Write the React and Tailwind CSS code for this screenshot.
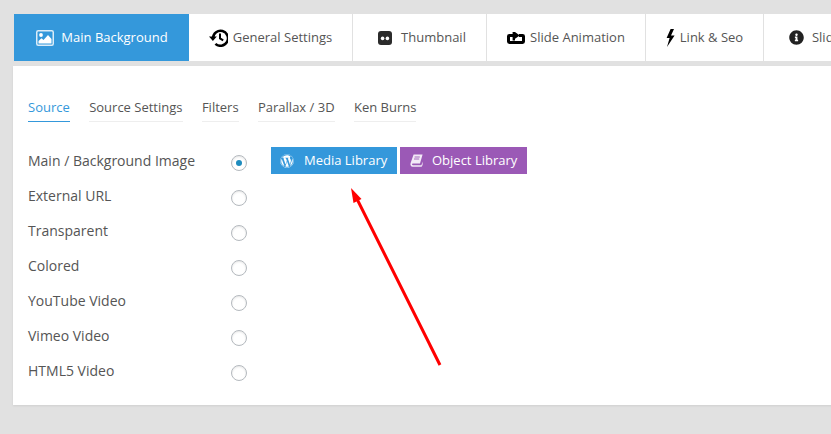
import React from 'react';
import { FaInfoCircle, FaWordpress } from 'react-icons/fa';

const ImageIcon = () => (
    <svg width="18" height="16" viewBox="0 0 18 16">
        <rect x="0.75" y="0.75" width="16.5" height="14.5" rx="1.5" fill="none" stroke="#dcecf8" strokeWidth="1.5" />
        <circle cx="5" cy="5" r="1.9" fill="#fff" />
        <path d="M2.5 13.5V11L5.5 8.2L7.5 10L12 5L15.5 9V13.5Z" fill="#fff" />
    </svg>
);

const HistoryIcon = () => (
    <svg width="19" height="18" viewBox="0 0 19 18">
        <path d="M4 9A7.5 7.5 0 1 1 6.4 14.8" fill="none" stroke="#000" strokeWidth="2.5" />
        <path d="M0 7.5H7.8L3.9 12Z" fill="#000" />
        <path d="M11 4.5V9.4L14.2 11.4" fill="none" stroke="#000" strokeWidth="2" />
    </svg>
);

const ThumbIcon = () => (
    <svg width="14" height="14" viewBox="0 0 14 14">
        <rect width="14" height="14" rx="3" fill="#2b2b2b" />
        <circle cx="4.6" cy="7.4" r="1.8" fill="#fff" />
        <circle cx="9.4" cy="7.4" r="1.8" fill="#fff" />
    </svg>
);

const LoopIcon = () => (
    <svg width="18" height="12" viewBox="0 0 18 12">
        <path d="M6 3.4H2.4Q1.5 3.4 1.5 4.3V9.6Q1.5 10.4 2.4 10.4H15.6Q16.5 10.4 16.5 9.6V4.3Q16.5 3.4 15.6 3.4H12" fill="none" stroke="#000" strokeWidth="3" />
        <path d="M8 0L12.8 3.4L8 6.8V8.6H5.6V0Z" fill="#000" />
    </svg>
);

const BoltIcon = () => (
    <svg width="9" height="18" viewBox="0 0 9 18">
        <path d="M4.6 0L0.6 9H3.6L1 18L8.6 6.6H5L8 0Z" fill="#000" />
    </svg>
);

const BookIcon = () => (
    <svg width="13" height="13" viewBox="0 0 13 13">
        <path d="M3.6 0.5H12.6L10 9.4H3Q1.8 9.4 2 10.4Q2.2 11.2 3.2 11.2H11.4L12.6 7.6V11L11.6 12.8H2.6Q0.6 12.6 0.4 10.4Q0.4 9.6 0.8 8.6Z" fill="#f3e9f7" />
        <path d="M4.6 3H9.8M4 5H9.2" stroke="#9b59b6" strokeWidth="0.9" />
    </svg>
);

const tabs = [
    { label: 'Main Background', cls: 'w-[175px] gap-[7px] pl-[1px]', active: true, icon: <ImageIcon /> },
    { label: 'General Settings', cls: 'w-[164px] gap-[5px]', icon: <HistoryIcon /> },
    { label: 'Thumbnail', cls: 'w-[134px] gap-[9px] pl-[5px]', icon: <ThumbIcon /> },
    { label: 'Slide Animation', cls: 'w-[159px] gap-[5px]', icon: <LoopIcon /> },
    { label: 'Link & Seo', cls: 'w-[118px] gap-[5px]', icon: <BoltIcon /> },
    { label: 'Slide Info', cls: 'w-[130px] gap-[8px]', icon: <FaInfoCircle className="text-[15px] text-[#222]" /> },
];

const subTabs = ['Source', 'Source Settings', 'Filters', 'Parallax / 3D', 'Ken Burns'];

const sources = [
    'Main / Background Image',
    'External URL',
    'Transparent',
    'Colored',
    'YouTube Video',
    'Vimeo Video',
    'HTML5 Video',
];

const App = () => {
    return (
        <div className="relative h-[434px] w-[831px] overflow-hidden bg-[#e1e1e1] pt-[14px] font-['Open_Sans',sans-serif] text-[13px] text-[#555]">
            {/* Main tabs */}
            <div className="ml-[14px] flex h-[47px] w-[900px]">
                {tabs.map((tab) => (
                    <div
                        key={tab.label}
                        className={`flex shrink-0 items-center justify-center ${tab.cls} ${tab.active ? 'bg-[#3498db] text-white' : 'border-r border-[#e1e1e1] bg-white'}`}
                    >
                        {tab.icon}
                        <span className="whitespace-nowrap">{tab.label}</span>
                    </div>
                ))}
            </div>

            {/* Panel */}
            <div className="ml-[13px] mt-[5px] h-[339px] w-[830px] bg-white pl-[15px] pt-[32px] shadow-[0_1px_2px_rgba(0,0,0,0.08)]">
                <div className="flex gap-[19.4px]">
                    {subTabs.map((name, i) => (
                        <div
                            key={name}
                            className={`h-[24px] whitespace-nowrap border-b leading-[18px] ${i === 0 ? 'border-[#3498db] text-[#3498db]' : 'border-[#eeeeee]'}`}
                        >
                            {name}
                        </div>
                    ))}
                </div>

                <div className="mt-[25px] flex">
                    <div className="w-[219px]">
                        {sources.map((name, i) => (
                            <div key={name} className="flex h-[35px] items-start justify-between pt-[4px] leading-[20px]">
                                <span className="text-[14px]">{name}</span>
                                <span className="mt-[4px] flex h-[16px] w-[16px] items-center justify-center rounded-full border border-[#b4b9be] bg-white shadow-[inset_0_1px_2px_rgba(0,0,0,0.1)]">
                                    {i === 0 && <span className="h-[6px] w-[6px] rounded-full bg-[#1e8cbe]" />}
                                </span>
                            </div>
                        ))}
                    </div>
                    <div className="ml-[24px] flex h-[27px] gap-[3px]">
                        <div className="flex h-[27px] w-[126px] items-center gap-[10px] bg-[#3498db] pl-[9px] text-white">
                            <FaWordpress className="text-[14px]" />
                            <span>Media Library</span>
                        </div>
                        <div className="flex h-[27px] w-[127px] items-center gap-[9px] bg-[#9b59b6] pl-[10px] text-white">
                            <BookIcon />
                            <span>Object Library</span>
                        </div>
                    </div>
                </div>
            </div>

            {/* Annotation arrow */}
            <svg className="absolute left-0 top-0" width="831" height="434">
                <line x1="440" y1="365" x2="357" y2="199" stroke="#ff0000" strokeWidth="3" />
                <path d="M351 188L361.5 199L353.5 203Z" fill="#ff0000" />
            </svg>
        </div>
    );
};

export default App;
